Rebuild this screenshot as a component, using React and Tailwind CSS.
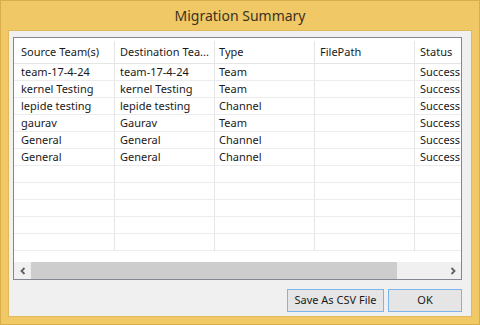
import React from "react";

const rows = [
  ["team-17-4-24", "team-17-4-24", "Team", "", "Success"],
  ["kernel Testing", "kernel Testing", "Team", "", "Success"],
  ["lepide testing", "lepide testing", "Channel", "", "Success"],
  ["gaurav", "Gaurav", "Team", "", "Success"],
  ["General", "General", "Channel", "", "Success"],
  ["General", "General", "Channel", "", "Success"],
  ["", "", "", "", ""],
  ["", "", "", "", ""],
  ["", "", "", "", ""],
  ["", "", "", "", ""],
  ["", "", "", "", ""],
];

const headers = ["Source Team(s)", "Destination Tea...", "Type", "FilePath", "Status"];

function Row({ cells, header }) {
  return (
    <div className={`flex shrink-0 ${header ? "h-[26px] pt-[3px] border-b border-[#e5e5e5]" : "h-[17px] border-b border-[#ececec]"}`}>
      <div className="w-[101px] shrink-0 border-r border-[#e5e5e5] pl-[7px] flex items-center whitespace-nowrap overflow-hidden">{cells[0]}</div>
      <div className="w-[100px] shrink-0 border-r border-[#e5e5e5] pl-[5px] flex items-center whitespace-nowrap overflow-hidden">{cells[1]}</div>
      <div className="w-[100px] shrink-0 border-r border-[#e5e5e5] pl-[4px] flex items-center whitespace-nowrap overflow-hidden">{cells[2]}</div>
      <div className="w-[100px] shrink-0 border-r border-[#e5e5e5] pl-[5px] flex items-center whitespace-nowrap overflow-hidden">{cells[3]}</div>
      <div className="w-[100px] shrink-0 pl-[5px] flex items-center whitespace-nowrap overflow-hidden">{cells[4]}</div>
    </div>
  );
}

export default function App() {
  return (
    <div
      className="w-[480px] h-[325px] bg-[#f0c866] flex flex-col border border-[#d9ad4a] text-[#1a1a1a]"
      style={{ fontFamily: '"Noto Sans", "Open Sans", sans-serif' }}
    >
      <div className="h-[29px] shrink-0 flex items-center justify-center text-[14px] text-[#3b3322]">
        Migration Summary
      </div>
      <div className="flex-1 mx-[7px] mb-[7px] bg-[#f0f0f0] flex flex-col min-h-0 border border-[#e0b95c]">
        <div className="mt-[6px] ml-[4px] w-[449px] h-[243px] border border-[#828790] bg-white flex flex-col overflow-hidden text-[11px]">
          <div className="flex-1 flex flex-col overflow-hidden min-h-0">
            <Row cells={headers} header />
            {rows.map((r, i) => (
              <Row key={i} cells={r} />
            ))}
          </div>
          <div className="h-[17px] shrink-0 flex bg-[#f0f0f0]">
            <div className="w-[17px] shrink-0 flex items-center justify-center bg-[#f0f0f0]">
              <svg width="8" height="8" viewBox="0 0 8 8">
                <polyline points="5.5,1 2.5,4 5.5,7" fill="none" stroke="#606060" strokeWidth="1.8" />
              </svg>
            </div>
            <div className="w-[366px] shrink-0 bg-[#cdcdcd]" />
            <div className="flex-1" />
            <div className="w-[17px] shrink-0 flex items-center justify-center">
              <svg width="8" height="8" viewBox="0 0 8 8">
                <polyline points="2.5,1 5.5,4 2.5,7" fill="none" stroke="#606060" strokeWidth="1.8" />
              </svg>
            </div>
          </div>
        </div>
        <div className="flex justify-end gap-[4px] mt-[9px] mr-[9px] text-[11px]">
          <button className="w-[97px] h-[23px] border border-[#7eb4ea] bg-[#e5e5e5] flex items-center justify-center">
            Save As CSV File
          </button>
          <button className="w-[74px] h-[23px] border border-[#7eb4ea] bg-[#e5e5e5] flex items-center justify-center">
            OK
          </button>
        </div>
      </div>
    </div>
  );
}
